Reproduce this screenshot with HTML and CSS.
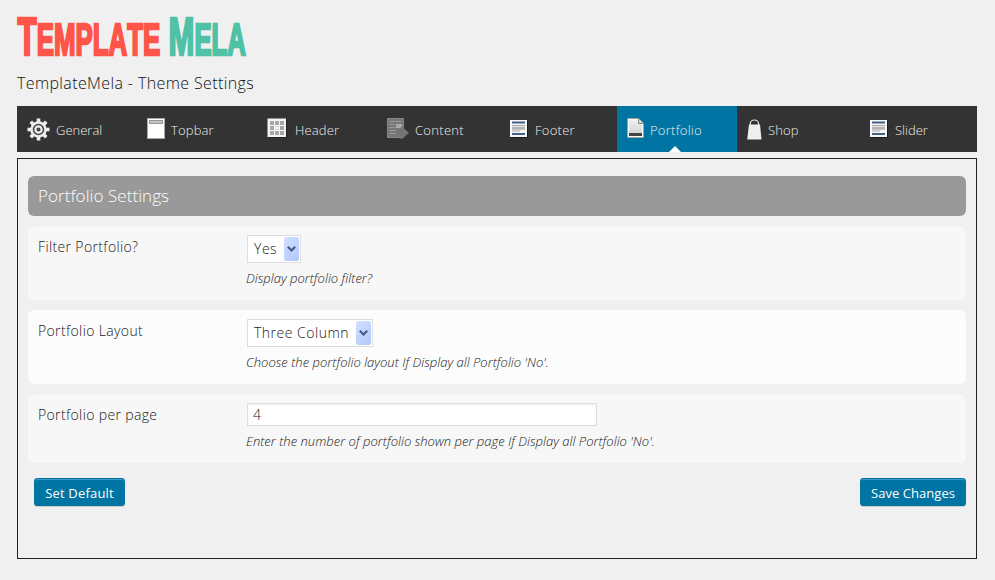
FILE: index.html
```html
<!DOCTYPE html>
<html lang="en">
<head>
<meta charset="utf-8">
<title>TemplateMela - Theme Settings</title>
<link rel="stylesheet" href="styles.css">
</head>
<body>
<header>
  <svg class="logo" width="260" height="71" viewBox="0 0 260 71" role="img" aria-label="Template Mela">
    <g transform="translate(.6 54.7) scale(.575 1)"><text class="logo-red"><tspan class="logo-cap">T</tspan><tspan class="logo-small">EMPLATE</tspan></text></g>
    <g transform="translate(151.5 54.7) scale(.572 1)"><text class="logo-green"><tspan class="logo-cap">M</tspan><tspan class="logo-small">ELA</tspan></text></g>
  </svg>
  <h1 class="title">TemplateMela - Theme Settings</h1>
</header>
<nav class="tabs">
  <a class="tab general">
    <svg width="23" height="23" viewBox="0 0 23 23"><g fill="#eee"><rect x="9.7" y="0.5" width="3.6" height="22"/><rect x="0.5" y="9.7" width="22" height="3.6"/><g transform="rotate(45 11.5 11.5)"><rect x="9.7" y="0.5" width="3.6" height="22"/><rect x="0.5" y="9.7" width="22" height="3.6"/></g><circle cx="11.5" cy="11.5" r="8.3"/></g><circle cx="11.5" cy="11.5" r="5" fill="none" stroke="#444" stroke-width="1.5"/><circle cx="11.5" cy="11.5" r="2" fill="#444"/></svg>
    <span>General</span></a>
  <a class="tab topbar">
    <svg width="18" height="21" viewBox="0 0 18 21"><rect x=".5" y=".5" width="17" height="20" fill="#fff" stroke="#aaa9a6"/><rect x="2.5" y="2.5" width="13" height="3" fill="#c4c4c4" stroke="#999"/></svg>
    <span>Topbar</span></a>
  <a class="tab header">
    <svg width="20" height="20" viewBox="0 0 20 20"><rect x="1" y="1" width="19" height="19" fill="#222"/><rect x=".5" y=".5" width="18.5" height="18.5" fill="#f4f4f4"/><path fill="#a6a6a6" d="M3 3h4v4H3zM8 3h4v4H8zM13 3h4v4h-4zM3 8h4v4H3zM13 8h4v4h-4zM3 13h4v4H3zM8 13h4v4H8zM13 13h4v4h-4z"/><path fill="#d8d8d8" d="M8 8h4v4H8z"/><path fill="#fff" d="M8.5 9h3v2h-3z"/></svg>
    <span>Header</span></a>
  <a class="tab content">
    <svg width="22" height="22" viewBox="0 0 22 22"><rect x=".5" y=".5" width="16" height="19" fill="#777" stroke="#858585"/><path d="M2.5 3.5h12M2.5 6.5h6M2.5 9.5h6M2.5 12.5h6M2.5 15.5h8" stroke="#9b9b9b"/><rect x="9" y="6" width="6" height="4" fill="#aaa"/><path d="M9 11h5V8l8 6.8-8 7V18H9z" fill="#757575"/></svg>
    <span>Content</span></a>
  <a class="tab footer">
    <svg width="18" height="18" viewBox="0 0 18 18"><rect x="1" y="1" width="17" height="17" fill="#1c1c1c"/><rect width="17" height="17" fill="#f7f7f7"/><path d="M2 2.5h13M2 14h13" stroke="#426188" stroke-width="2"/><path d="M2 5.5h13M2 11h8" stroke="#a6a6a6"/><path d="M2 8.3h13" stroke="#b4b4b4" stroke-width="3"/></svg>
    <span>Footer</span></a>
  <a class="tab portfolio active">
    <svg width="17" height="20" viewBox="0 0 17 20"><defs><linearGradient id="paper" x2="0" y2="1"><stop stop-color="#f4f4f4"/><stop offset="1" stop-color="#ccc"/></linearGradient></defs><path d="M.5.5h11l5 5v14H.5z" fill="url(#paper)" stroke="#aaa392"/><path d="M1.5 1.5h9.6l4.4 4.4v12.6h-14z" fill="none" stroke="#fff"/><path d="M11.5.5v5h5" fill="#ddd" stroke="#888"/><rect x="2" y="15" width="13" height="3" fill="#444"/></svg>
    <span>Portfolio</span></a>
  <a class="tab shop">
    <svg width="15" height="21" viewBox="0 0 15 21"><path d="M3.2 7V5.2a4.2 4.2 0 0 1 8.4 0V7" fill="none" stroke="#e6e6e6" stroke-width="1.2"/><path d="M2 5.5h11l1.5 15H.2z" fill="#eee"/></svg>
    <span>Shop</span></a>
  <a class="tab slider">
    <svg width="18" height="18" viewBox="0 0 18 18"><rect x="1" y="1" width="17" height="17" fill="#1c1c1c"/><rect width="17" height="17" fill="#f7f7f7"/><path d="M2 2.5h13M2 14h13" stroke="#426188" stroke-width="2"/><path d="M2 5.5h13M2 11h8" stroke="#a6a6a6"/><path d="M2 8.3h13" stroke="#b4b4b4" stroke-width="3"/></svg>
    <span>Slider</span></a>
</nav>
<main class="panel">
  <h2 class="heading">Portfolio Settings</h2>
  <section class="row">
    <div class="label">Filter Portfolio?</div>
    <div class="field">
      <div class="select yes"><span>Yes</span><i class="arrow"><svg width="9" height="6" viewBox="0 0 9 6"><path d="M.8.8l3.7 3.7L8.2.8" fill="none" stroke="#435d86" stroke-width="2.2"/></svg></i></div>
      <p class="hint">Display portfolio filter?</p>
    </div>
  </section>
  <section class="row light">
    <div class="label">Portfolio Layout</div>
    <div class="field">
      <div class="select three"><span>Three Column</span><i class="arrow"><svg width="9" height="6" viewBox="0 0 9 6"><path d="M.8.8l3.7 3.7L8.2.8" fill="none" stroke="#435d86" stroke-width="2.2"/></svg></i></div>
      <p class="hint">Choose the portfolio layout If Display all Portfolio 'No'.</p>
    </div>
  </section>
  <section class="row short">
    <div class="label">Portfolio per page</div>
    <div class="field">
      <input class="input" type="text" value="4">
      <p class="hint">Enter the number of portfolio shown per page If Display all Portfolio 'No'.</p>
    </div>
  </section>
  <div class="actions">
    <button class="button default">Set Default</button>
    <button class="button save">Save Changes</button>
  </div>
</main>
</body>
</html>
```
FILE: styles.css
```css
* { box-sizing: border-box; }
body {
  margin: 0;
  padding: 0 18px 0 17px;
  height: 580px;
  overflow: hidden;
  background: #f0f0f0;
  color: #1a1a1a;
  font: 300 14px/20px "Open Sans", sans-serif;
}
.logo { display: block; overflow: visible; }
.logo text { font-family: "Liberation Sans", sans-serif; font-weight: 700; font-kerning: none; stroke-width: 2.6; }
.logo-cap { font-size: 54.4px; }
.logo-small { font-size: 45px; }
.logo-red { fill: #ff5549; stroke: #ff5549; }
.logo-green { fill: #4fc1a6; stroke: #4fc1a6; }
.title { margin: 0; height: 24px; font-size: 16px; line-height: 24px; font-weight: 300; letter-spacing: .38px; color: #111; }

.tabs { display: flex; width: 960px; height: 46px; margin-top: 11px; background: #333; }
.tab { position: relative; display: flex; width: 120px; padding-left: 10px; color: #eee; font-size: 13px; letter-spacing: .15px; }
.tab svg { flex: none; margin-top: 12px; }
.tab span { margin-top: 14px; margin-left: 6px; white-space: nowrap; }
.general { letter-spacing: 0; }
.header span { margin-left: 8px; }
.content { letter-spacing: .3px; }
.footer, .slider { padding-left: 13px; }
.footer { letter-spacing: .25px; }
.footer svg, .slider svg { margin-top: 14px; }
.footer span, .slider span { margin-left: 7px; }
.slider { letter-spacing: 0; }
.portfolio { letter-spacing: .25px; }
.shop svg { margin-top: 13px; }
.active { background: #0074a2; }
.active::after {
  content: "";
  position: absolute;
  left: 52px;
  bottom: 0;
  border: 6px solid transparent;
  border-top: 0;
  border-bottom-color: #fff;
}

.panel { width: 960px; height: 401px; margin-top: 6px; padding: 17px 10px 0; border: 1px solid #222; }
.heading {
  margin: 0 0 10px;
  width: 938px;
  height: 40px;
  padding-left: 10px;
  border-radius: 6px;
  background: #999;
  color: #fff;
  font-size: 17px;
  font-weight: 300;
  line-height: 40px;
  letter-spacing: .06px;
}
.row { display: flex; height: 74px; margin-bottom: 10px; padding: 9px 10px 0; border-radius: 6px; background: #f7f7f7; }
.light { background: #fcfcfc; }
.short { height: 69px; }
.label { width: 209px; margin-top: 2px; letter-spacing: .36px; }
.select {
  display: flex;
  justify-content: space-between;
  height: 28px;
  padding: 1px 1px 1px 6px;
  border: 1px solid #ddd;
  background: #fff;
  line-height: 24px;
  letter-spacing: .5px;
}
.yes { width: 54px; }
.three { width: 126px; }
.arrow {
  display: flex;
  align-items: center;
  justify-content: center;
  width: 15px;
  height: 24px;
  border-radius: 2px;
  background: linear-gradient(135deg, #d3e0ff, #afc8fb);
}
.hint { margin: 5px 0 0 -1px; font-size: 13px; line-height: 20px; font-style: italic; letter-spacing: .02px; white-space: nowrap; }
.input {
  display: block;
  width: 350px;
  height: 23px;
  padding: 0 5px;
  border: 1px solid #ddd;
  background: #fff;
  box-shadow: inset 0 1px 2px rgba(0, 0, 0, .07);
  color: #222;
  font: 300 14px/20px "Open Sans", sans-serif;
}
.actions { display: flex; justify-content: space-between; margin-top: 15px; padding-left: 6px; }
.button {
  height: 28px;
  padding: 2px 0 0;
  border: 1px solid #0074a2;
  border-radius: 3px;
  background: #0074a2;
  box-shadow: inset 0 1px 0 #3d9ac2, 0 1px 0 rgba(0, 0, 0, .15);
  color: #fff;
  font: 400 13px/24px "Open Sans", sans-serif;
}
.default { width: 91px; letter-spacing: .18px; }
.save { width: 106px; letter-spacing: .05px; }
```
